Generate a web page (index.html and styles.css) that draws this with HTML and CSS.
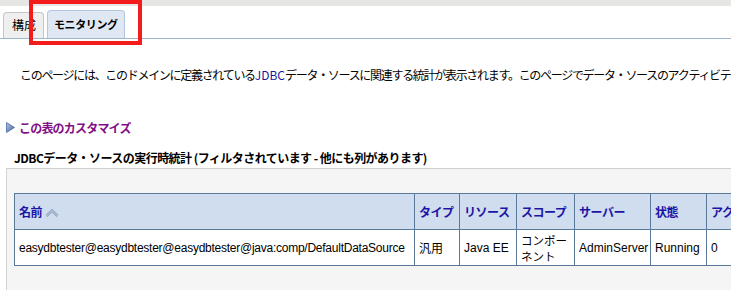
FILE: index.html
```html
<!DOCTYPE html>
<html lang="ja">
<head>
<meta charset="utf-8">
<link rel="stylesheet" href="styles.css">
</head>
<body>
<div class="page">
  <div class="topbar"></div>
  <div class="tabs">
    <div class="tab">構成</div>
    <div class="tab active">モニタリング</div>
  </div>
  <div class="highlight"></div>
  <p class="intro">このページには、このドメインに定義されている<span class="latin">JDBC</span>データ・ソースに関連する統計が表示されます。このページでデータ・ソースのアクティビティを監視できます。</p>
  <div class="customize">
    <svg class="tri" width="9" height="11" viewBox="0 0 9 11"><defs><linearGradient id="g" x1="0" y1="0" x2="1" y2="1"><stop offset="0" stop-color="#b9c9e4"/><stop offset="1" stop-color="#3d5f9c"/></linearGradient></defs><path d="M0.5 0.5 L8.5 5.5 L0.5 10.5 Z" fill="url(#g)" stroke="#4a6aa5" stroke-width="0.8"/></svg>
    <span class="link">この表のカスタマイズ</span>
  </div>
  <h2 class="title">JDBCデータ・ソースの実行時統計 (フィルタされています - 他にも列があります)</h2>
  <div class="panel">
    <table class="grid">
      <colgroup>
        <col class="c1"><col class="c2"><col class="c3"><col class="c4"><col class="c5"><col class="c6"><col class="c7">
      </colgroup>
      <thead>
        <tr>
          <th>名前 <svg class="sort" width="14" height="10" viewBox="0 0 14 10"><path d="M1.5 8 L7 2.5 L12.5 8" fill="none" stroke="#8fa2bd" stroke-width="2.6"/><path d="M1.5 8 L7 2.5 L12.5 8" fill="none" stroke="#c8d3e3" stroke-width="1"/></svg></th>
          <th>タイプ</th>
          <th>リソース</th>
          <th>スコープ</th>
          <th>サーバー</th>
          <th>状態</th>
          <th>アクティブ</th>
        </tr>
      </thead>
      <tbody>
        <tr>
          <td class="name">easydbtester@easydbtester@easydbtester@java:comp/DefaultDataSource</td>
          <td>汎用</td>
          <td>Java EE</td>
          <td class="wrap">コンポーネント</td>
          <td>AdminServer</td>
          <td>Running</td>
          <td>0</td>
        </tr>
      </tbody>
    </table>
  </div>
</div>
</body>
</html>
```
FILE: styles.css
```css
html, body {
  margin: 0;
  padding: 0;
  background: #ffffff;
}
body {
  width: 731px;
  height: 290px;
  overflow: hidden;
  font-family: "Noto Sans CJK JP", "Liberation Sans", sans-serif;
  font-size: 12px;
  color: #000;
}
.page {
  position: relative;
  width: 731px;
  height: 290px;
  overflow: hidden;
}
.topbar {
  height: 6px;
  background: #e6e7e4;
}
.tabs {
  display: flex;
  align-items: flex-end;
  gap: 3px;
  padding-left: 3px;
  height: 32px;
  border-bottom: 1px solid #9db6cf;
}
.tab {
  box-sizing: border-box;
  width: 41px;
  height: 26px;
  padding: 0 0 0 8px;
  line-height: 24px;
  font-size: 12px;
  background: #efefef;
  border: 1px solid #c6c6c6;
  border-bottom: none;
  border-radius: 4px 4px 0 0;
  white-space: nowrap;
}
.tab.active {
  width: 78px;
  height: 28px;
  line-height: 26px;
  padding: 0 0 0 6px;
  background: #dfe8f2;
  border-color: #b3c6dd;
  font-weight: bold;
  font-size: 11px;
  letter-spacing: -0.4px;
}
.highlight {
  position: absolute;
  left: 29px;
  top: 0;
  width: 113px;
  height: 45px;
  box-sizing: border-box;
  border: 4px solid #f21c1c;
}
.intro {
  margin: 29px 0 0 20px;
  font-size: 12px;
  line-height: 14px;
  white-space: nowrap;
  letter-spacing: -1.3px;
}
.intro .latin {
  color: #1a1a99;
  letter-spacing: 0;
}
.customize {
  display: flex;
  align-items: center;
  gap: 4px;
  margin: 38px 0 0 6px;
  height: 14px;
}
.link {
  color: #7f1086;
  font-weight: bold;
  font-size: 12px;
  letter-spacing: -0.8px;
}
.title {
  margin: 17px 0 0 6px;
  padding: 0 0 3px 8px;
  font-size: 12px;
  line-height: 14px;
  font-weight: bold;
  border-bottom: 1px solid #cfcfcf;
  white-space: nowrap;
  letter-spacing: -0.55px;
}
.panel {
  margin-left: 6px;
  height: 200px;
  padding: 24px 0 0 7px;
  background: #f5f5f5;
  border-left: 1px solid #d4d4d4;
}
.grid {
  border-collapse: collapse;
  table-layout: fixed;
  width: 800px;
  background: #ffffff;
  font-family: "Liberation Sans", "Noto Sans CJK JP", sans-serif;
  font-size: 12px;
}
.c1 { width: 400px; }
.c2 { width: 45px; }
.c3 { width: 57px; }
.c4 { width: 58px; }
.c5 { width: 76px; }
.c6 { width: 56px; }
.c7 { width: 108px; }
.grid th, .grid td {
  border: 1px solid #5a7898;
  padding: 0 4px;
  text-align: left;
  white-space: nowrap;
  overflow: hidden;
}
.grid th {
  height: 35px;
  background: #d0ddee;
  color: #1c14a6;
  font-family: "Noto Sans CJK JP", sans-serif;
  font-weight: bold;
  font-size: 12px;
  letter-spacing: -0.5px;
}
.grid td {
  height: 35px;
}
.grid td.name {
  letter-spacing: -0.25px;
}
.grid td.wrap {
  white-space: normal;
  line-height: 16px;
  font-family: "Noto Sans CJK JP", sans-serif;
  font-size: 11.5px;
}
.sort {
  vertical-align: -1px;
  margin-left: 1px;
}
```
